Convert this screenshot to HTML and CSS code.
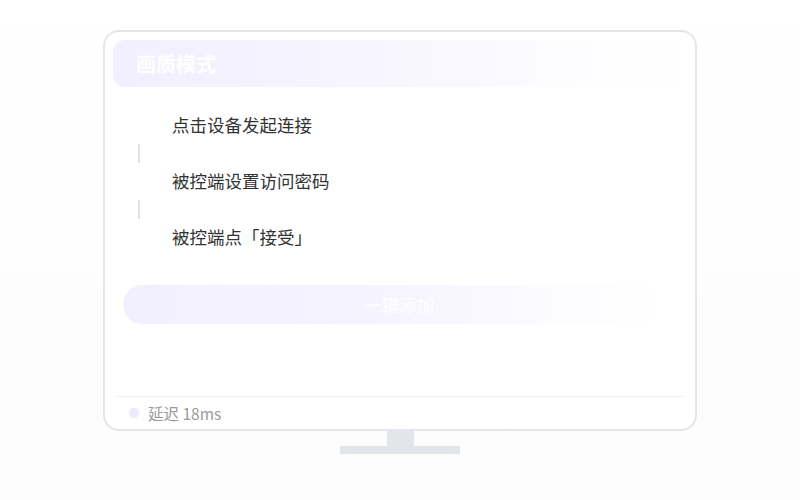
FILE: index.html
```html
<!DOCTYPE html>
<html lang="zh-CN">
<head>
  <meta charset="UTF-8">
  <title>画质模式</title>
  <link rel="stylesheet" href="styles.css">
</head>
<body>

  <div class="scene">
    <div class="monitor">
      <div class="header">
        <span class="header-title">画质模式</span>
        <span class="header-pill"></span>
      </div>

      <div class="steps">
        <div class="step">点击设备发起连接</div>
        <div class="connector"><span></span></div>
        <div class="step">被控端设置访问密码</div>
        <div class="connector"><span></span></div>
        <div class="step">被控端点「接受」</div>
      </div>

      <div class="action">一键添加</div>

      <div class="spacer"></div>

      <div class="footer">
        <span class="dot"></span>
        <span class="latency">延迟 18ms</span>
      </div>
    </div>
    <div class="neck"></div>
    <div class="base"></div>
  </div>

</body>
</html>
```

FILE: styles.css
```css
body {
  margin: 0;
  width: 800px;
  height: 500px;
  overflow: hidden;
  font-family: "Noto Sans CJK SC", "Noto Sans", sans-serif;
  background: linear-gradient(180deg, #ffffff 0%, #fcfcfd 100%);
}

.scene {
  display: flex;
  flex-direction: column;
  align-items: center;
  padding-top: 30px;
}

.monitor {
  width: 594px;
  height: 401px;
  box-sizing: border-box;
  border: 2px solid #e3e6ea;
  border-radius: 16px;
  background: #ffffff;
  padding: 8px 8px 0 8px;
  display: flex;
  flex-direction: column;
}

.header {
  height: 47px;
  border-radius: 12px;
  background: linear-gradient(90deg, #f2efff 0%, #f7f5ff 45%, #fdfcff 80%, #ffffff 100%);
  display: flex;
  align-items: center;
  justify-content: space-between;
  padding: 0 18px 0 23px;
}

.header-title {
  color: #ffffff;
  font-size: 20px;
  font-weight: 700;
}

.header-pill {
  width: 44px;
  height: 22px;
  border-radius: 11px;
  background: #ffffff;
  opacity: 0.45;
  margin-right: 10px;
}

.steps {
  margin-top: 26px;
  display: flex;
  flex-direction: column;
}

.step {
  height: 24px;
  line-height: 24px;
  font-size: 17.5px;
  color: #333333;
  padding-left: 59px;
}

.connector {
  height: 32px;
  display: flex;
  align-items: center;
  padding-left: 25px;
}

.connector span {
  width: 2px;
  height: 19px;
  background: #dfe1e5;
}

.action {
  margin: 36px 0 0 10px;
  width: 537px;
  height: 39px;
  border-radius: 20px;
  background: linear-gradient(90deg, #f2efff 0%, #f6f4ff 50%, #fcfbff 80%, #ffffff 100%);
  color: #ffffff;
  font-size: 17.5px;
  line-height: 39px;
  text-align: center;
  padding-left: 16px;
  box-sizing: border-box;
}

.spacer {
  flex: 1;
}

.footer {
  margin: 0 3px;
  height: 32px;
  border-top: 1px solid #eef0f3;
  display: flex;
  align-items: center;
  padding-left: 13px;
}

.dot {
  width: 10px;
  height: 10px;
  border-radius: 50%;
  background: #ece9fb;
  margin-right: 9px;
}

.latency {
  font-size: 15.5px;
  color: #9a9a9a;
}

.neck {
  width: 27px;
  height: 15px;
  background: #e2e5e9;
}

.base {
  width: 120px;
  height: 8px;
  background: #e2e5e9;
}
```
